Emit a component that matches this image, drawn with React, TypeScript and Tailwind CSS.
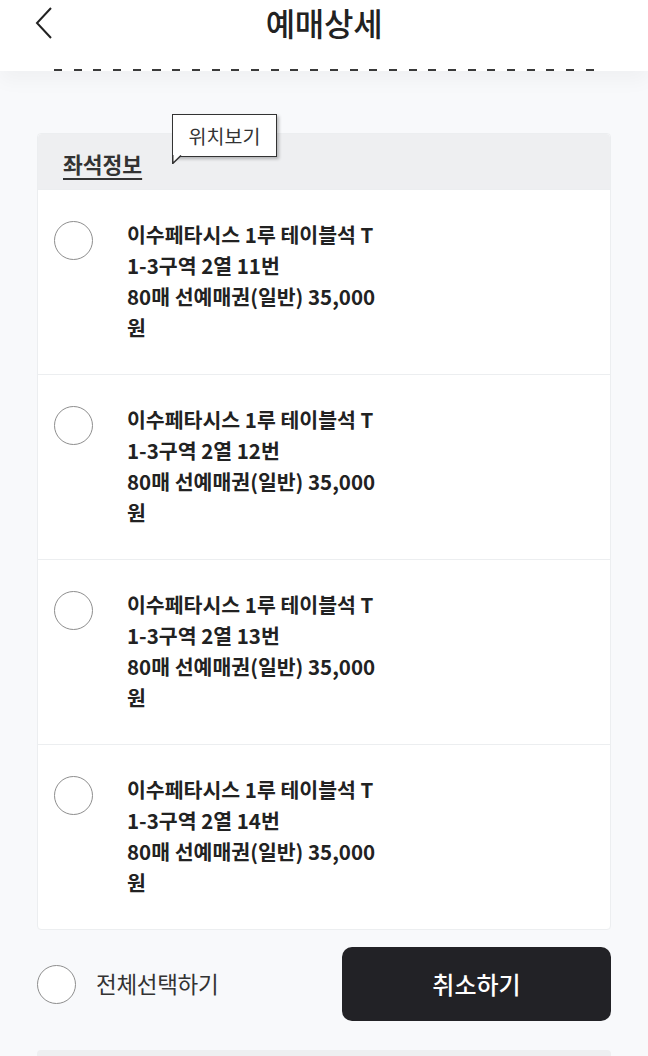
import { useState } from "react";

const seats = ["11", "12", "13", "14"];

function Radio({ checked, onClick }: { checked: boolean; onClick: () => void }) {
  return (
    <button
      type="button"
      onClick={onClick}
      className="flex h-[39px] w-[39px] shrink-0 items-center justify-center rounded-full border-[1.5px] border-[#8e8e8e] bg-white"
    >
      {checked ? <span className="h-[21px] w-[21px] rounded-full bg-[#222226]" /> : null}
    </button>
  );
}

function App() {
  const [selected, setSelected] = useState<string[]>([]);

  function toggle(no: string) {
    setSelected((prev) => (prev.includes(no) ? prev.filter((s) => s !== no) : [...prev, no]));
  }

  const allChecked = selected.length === seats.length;

  return (
    <main className="h-[1056px] w-full overflow-hidden bg-[#f8f9fb] font-['Noto_Sans_CJK_KR','Noto_Sans',sans-serif] text-[#222]">
      <header className="relative z-10 bg-white shadow-[0_10px_18px_rgba(0,0,0,0.035)]">
        <div className="relative flex h-[69px] items-center justify-center">
          <button type="button" className="absolute left-[34px] top-[6px]">
            <svg width="20" height="34" viewBox="0 0 20 34" fill="none">
              <path d="M17 2L3 17l14 15" stroke="#222" strokeWidth="2" />
            </svg>
          </button>
          <h1 className="-mt-[25px] text-[32px] font-medium tracking-[-0.3px] text-[#222]">예매상세</h1>
        </div>
        <div className="ml-[54px] h-[2px] w-[541px] bg-[repeating-linear-gradient(90deg,#3a3a3a_0_8px,transparent_8px_19.7px)]" />
      </header>

      <section className="relative mx-[37px] mt-[62px] rounded-[4px] border border-[#eceef0] bg-white">
        <div className="flex h-[55px] items-center rounded-t-[4px] bg-[#eeeff1] px-[25px]">
          <span className="mt-[4px] text-[21.5px] font-bold leading-none text-[#333] underline decoration-2 underline-offset-[5px]">
            좌석정보
          </span>
        </div>

        <div className="absolute left-[134px] top-[-20px]">
          <div className="relative flex h-[43px] w-[105px] items-center justify-center border-[1.5px] border-[#333] bg-white shadow-[2px_2px_3px_rgba(0,0,0,0.25)]">
            <span className="text-[19.5px] leading-none text-[#333]">위치보기</span>
          </div>
          <svg className="absolute left-0 top-[41px]" width="10" height="9" viewBox="0 0 10 9">
            <path d="M0.75 0V8.5L9 0Z" fill="#fff" />
            <path d="M0.75 0V8.5L9 0.5" fill="none" stroke="#333" strokeWidth="1.5" />
          </svg>
        </div>

        {seats.map((no) => (
          <div key={no} className="flex h-[185px] items-start gap-[34px] border-t border-[#eceef0] pl-[16px] pt-[31px] first:border-t-0">
            <Radio checked={selected.includes(no)} onClick={() => toggle(no)} />
            <p className="-mt-[2px] text-[20.5px] font-bold leading-[31px] text-[#222]">
              이수페타시스 1루 테이블석 T
              <br />
              1-3구역 2열 {no}번
              <br />
              80매 선예매권(일반) 35,000
              <br />원
            </p>
          </div>
        ))}
      </section>

      <div className="mx-[37px] mt-[17px] flex items-center justify-between">
        <label className="flex items-center gap-[20px]">
          <Radio checked={allChecked} onClick={() => setSelected(allChecked ? [] : seats)} />
          <span className="text-[22.5px] tracking-[-0.3px] text-[#333]">전체선택하기</span>
        </label>
        <button
          type="button"
          className="flex h-[74px] w-[269px] items-center justify-center rounded-[10px] bg-[#222226] text-[24px] font-medium text-white"
        >
          취소하기
        </button>
      </div>

      <div className="mx-[37px] mt-[29px] h-[20px] rounded-t-[4px] bg-[#eeeff1]" />
    </main>
  );
}

export default App;
